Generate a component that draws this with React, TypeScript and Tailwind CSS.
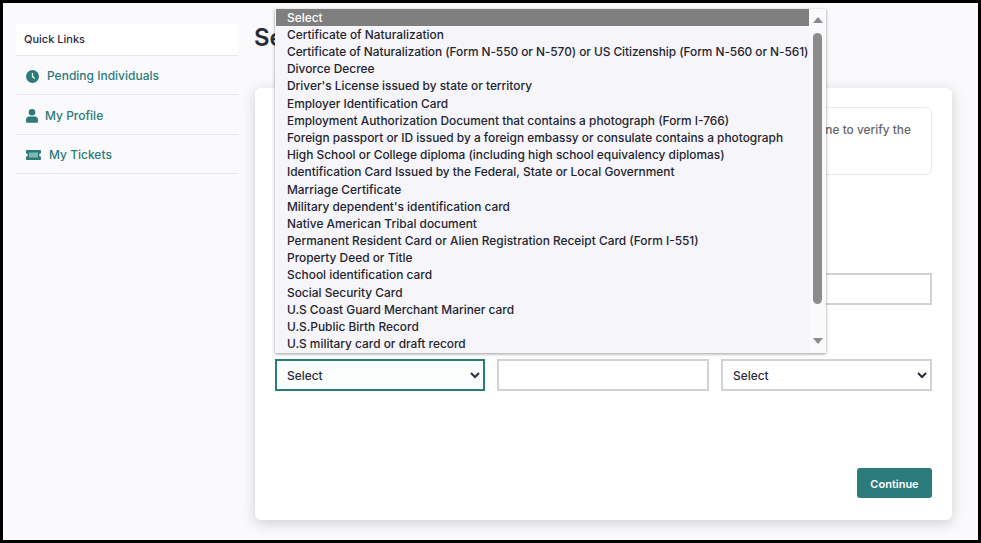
const options = [
  "Certificate of Naturalization",
  "Certificate of Naturalization (Form N-550 or N-570) or US Citizenship (Form N-560 or N-561)",
  "Divorce Decree",
  "Driver's License issued by state or territory",
  "Employer Identification Card",
  "Employment Authorization Document that contains a photograph (Form I-766)",
  "Foreign passport or ID issued by a foreign embassy or consulate contains a photograph",
  "High School or College diploma (including high school equivalency diplomas)",
  "Identification Card Issued by the Federal, State or Local Government",
  "Marriage Certificate",
  "Military dependent's identification card",
  "Native American Tribal document",
  "Permanent Resident Card or Alien Registration Receipt Card (Form I-551)",
  "Property Deed or Title",
  "School identification card",
  "Social Security Card",
  "U.S Coast Guard Merchant Mariner card",
  "U.S.Public Birth Record",
  "U.S military card or draft record",
];

const ClockIcon = () => (
  <svg viewBox="0 0 13 13" className="h-[13px] w-[13px] shrink-0">
    <circle cx="6.5" cy="6.5" r="6.5" fill="#2a7b7a" />
    <path d="M6.5 3v3.7l2.3 1.8" fill="none" stroke="#fff" strokeWidth="1.3" />
  </svg>
);

const PersonIcon = () => (
  <svg viewBox="0 0 12 14" className="h-[14px] w-[12px] shrink-0">
    <circle cx="6" cy="3.3" r="3.3" fill="#2a7b7a" />
    <path d="M0 12.5V11a3.6 3.6 0 0 1 3.6-3.6h4.8A3.6 3.6 0 0 1 12 11v1.500a1.200 1.200 0 0 1-1.200 1.200H1.200A1.200 1.200 0 0 1 0 12.500z" fill="#2a7b7a" />
  </svg>
);

const TicketIcon = () => (
  <svg viewBox="0 0 15 10" className="h-[10px] w-[15px] shrink-0">
    <path d="M1 0h13a1 1 0 0 1 1 1v2.200a1.800 1.800 0 0 0 0 3.600V9a1 1 0 0 1-1 1H1a1 1 0 0 1-1-1V6.800a1.800 1.800 0 0 0 0-3.600V1a1 1 0 0 1 1-1z" fill="#2a7b7a" />
    <rect x="3" y="2.500" width="9" height="5" fill="#7fb5b3" />
  </svg>
);

const links = [
  { label: "Pending Individuals", gap: "gap-[8px]", icon: <ClockIcon /> },
  { label: "My Profile", gap: "gap-[7px]", icon: <PersonIcon /> },
  { label: "My Tickets", gap: "gap-[8px]", icon: <TicketIcon /> },
];

const Dropdown = () => (
  <div className="absolute left-[272px] top-[6px] z-10 flex w-[551px] bg-[#f5f5fa] shadow-[0_1px_3px_rgba(0,0,0,0.4)]">
    <div className="min-w-0 flex-1 pl-px">
      <div className="flex h-[17.2px] items-center bg-[#7f7f7f] pl-[11px] font-medium text-white">Select</div>
      {options.map((o) => (
        <div
          key={o}
          className={`flex h-[17.2px] items-center whitespace-nowrap pl-[11px] text-[#24242f] ${o.includes("N-561") ? "tracking-[-0.06px]" : ""}`}
        >
          {o}
        </div>
      ))}
    </div>
    <div className="flex w-[17px] shrink-0 flex-col items-center bg-[#fafafc] pt-[8px] pb-[9px]">
      <div className="h-0 w-0 border-x-[5px] border-b-[6px] border-x-transparent border-b-[#8a8a8a]" />
      <div className="mt-[10px] h-[271px] w-[9px] rounded-full bg-[#8c8c8c]" />
      <div className="mt-auto h-0 w-0 border-x-[5px] border-t-[6px] border-x-transparent border-t-[#8a8a8a]" />
    </div>
  </div>
);

export default function App() {
  return (
    <div className="relative flex h-[543px] w-[981px] overflow-hidden border-[3px] border-black bg-[#fafafd] font-['Inter',sans-serif] text-[11.9px] font-medium">
      <aside className="ml-[13px] mt-[21px] w-[222px] shrink-0">
        <div className="flex h-[32px] items-center border-b border-[#e8e8ec] bg-white pl-[8px] text-[11px] text-[#2b2b3a]">
          Quick Links
        </div>
        {links.map((l) => (
          <div key={l.label} className={`flex h-[39.4px] items-center border-b border-[#e8e8ec] pl-[10px] pt-[2px] text-[12px] text-[#2a7b7a] ${l.gap}`}>
            {l.icon}
            {l.label}
          </div>
        ))}
      </aside>

      <main className="ml-[17px] flex-1 pr-[26px]">
        <h1 className="-ml-px mt-[19px] h-[32px] text-[24px] leading-[32px] font-semibold text-[#2b2b3a]">Se</h1>
        <section className="mt-[34px] flex h-[432px] w-[697px] flex-col rounded-[6px] bg-white px-[20px] pt-[19px] pb-[22px] shadow-[0_3px_14px_rgba(0,0,0,0.18)]">
          <div className="h-[68px] rounded-[6px] border border-[#ebebee] pt-[13px] pr-[20px] text-right text-[#66666e]">
            ne to verify the
          </div>
          <input className="mt-[98px] h-[32px] w-full border-2 border-[#d2d2d6] bg-white" />
          <div className="mt-[54px] flex gap-[12px]">
            <select className="h-[32px] w-[210px] border-2 border-[#2a7b7a] bg-[#f9fdfc] pl-[6px] text-[#2b2b3a]">
              <option>Select</option>
            </select>
            <input className="h-[32px] w-[212px] border-2 border-[#d2d2d6] bg-white" />
            <select className="h-[32px] w-[211px] border-2 border-[#d2d2d6] bg-white pl-[6px] text-[#2b2b3a]">
              <option>Select</option>
            </select>
          </div>
          <div className="mt-auto flex justify-end">
            <button className="h-[30px] w-[75px] rounded-[3px] bg-[#2a7b7a] pt-[3px] text-[11px] font-semibold text-white">Continue</button>
          </div>
        </section>
      </main>

      <Dropdown />
    </div>
  );
}
